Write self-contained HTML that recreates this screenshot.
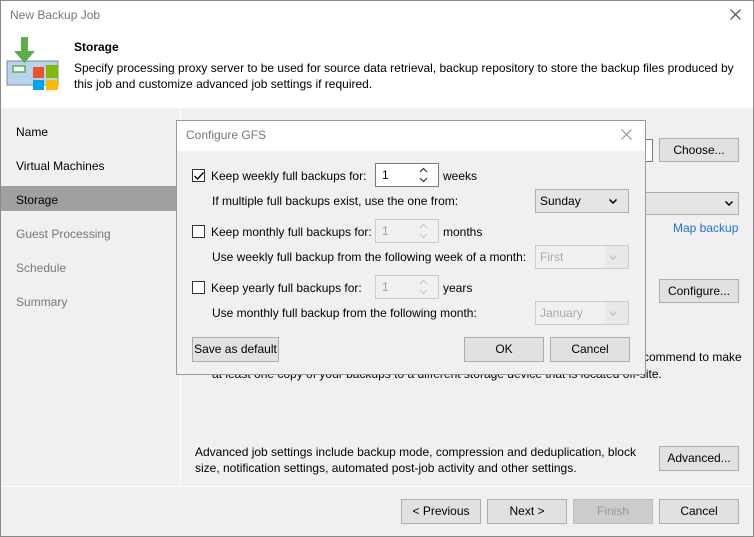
<!DOCTYPE html><html><head><style>
*{box-sizing:border-box;margin:0;padding:0}
body{width:754px;height:537px;overflow:hidden;font-family:"Liberation Sans",sans-serif;font-size:12px;color:#000;background:#f0f0f0;position:relative}
.a{position:absolute;white-space:nowrap}
.btn{position:absolute;background:#e1e1e1;border:1px solid #adadad;text-align:center;line-height:22px;font-size:12px}
.cb{position:absolute;width:13px;height:13px;border:1px solid #333;background:#fff}
.sp{position:absolute;width:64px;height:24px;border:1px solid #7a7a7a;background:#fff;padding-left:6px;line-height:22px}
.sp.d{border-color:#ccc;background:#f0f0f0;color:#a0a0a0}
.combo{position:absolute;width:94px;height:24px;border:1px solid #adadad;background:#e5e5e5;padding-left:4px;line-height:22px}
.combo.d{border-color:#ccc;background:#f0f0f0;color:#a8a8a8}
.nav{position:absolute;left:16px}
svg.i{position:absolute}
</style></head><body>
<div class="a" style="left:0;top:0;width:754px;height:537px;border:1px solid #8a8a8a"></div>
<div class="a" style="left:1px;top:1px;width:752px;height:107px;background:#fff"></div>
<div class="a" style="left:10px;top:8px;color:#777;font-size:12px">New Backup Job</div>
<svg class="i" style="left:730px;top:9px" width="11" height="11"><path d="M0.5 0.5L10.5 10.5M10.5 0.5L0.5 10.5" stroke="#444" stroke-width="1.2"/></svg>
<svg class="a" style="left:6px;top:36px" width="56" height="54" viewBox="0 0 56 54">
<rect x="1" y="25" width="51" height="24" fill="#b7d3ee" stroke="#7a8a99"/>
<rect x="7" y="30" width="12" height="6" fill="#fff" stroke="#5ab046" stroke-width="1.5"/>
<path d="M15 1h7v14h7l-10.5 12L8 15h7z" fill="#5ab046"/>
<rect x="27" y="31" width="11" height="11" fill="#f25022"/>
<rect x="40" y="29" width="12" height="13" fill="#7fba00"/>
<rect x="27" y="44" width="11" height="10" fill="#00a4ef"/>
<rect x="40" y="44" width="12" height="10" fill="#ffb900"/>
</svg>
<div class="a" style="left:74px;top:40px;font-weight:bold">Storage</div>
<div class="a" style="left:74px;top:60px;line-height:16px">Specify processing proxy server to be used for source data retrieval, backup repository to store the backup files produced by<br>this job and customize advanced job settings if required.</div>
<div class="a" style="left:180px;top:108px;width:1px;height:378px;background:#fff"></div>
<div class="a" style="left:1px;top:486px;width:752px;height:1px;background:#fff"></div>
<div class="nav a" style="top:125px">Name</div>
<div class="nav a" style="top:159px">Virtual Machines</div>
<div class="a" style="left:1px;top:186px;width:179px;height:25px;background:#a0a0a0"></div>
<div class="nav a" style="top:193px">Storage</div>
<div class="nav a" style="top:227px;color:#777">Guest Processing</div>
<div class="nav a" style="top:261px;color:#777">Schedule</div>
<div class="nav a" style="top:295px;color:#777">Summary</div>
<div class="a" style="left:600px;top:139px;width:53px;height:23px;border:1px solid #7a7a7a;background:#fff"></div>
<div class="btn" style="left:659px;top:138px;width:80px;height:24px">Choose...</div>
<div class="a" style="left:600px;top:192px;width:139px;height:23px;border:1px solid #adadad;background:#e5e5e5"></div>
<svg class="i" style="left:725px;top:201px" width="8" height="5"><path d="M0.5 0.5L4 4L7.5 0.5" stroke="#000" stroke-width="1.5" fill="none"/></svg>
<div class="a" style="left:673px;top:221px;color:#1a73e8">Map backup</div>
<div class="btn" style="left:659px;top:279px;width:80px;height:24px">Configure...</div>
<div class="a" style="left:643px;top:350px">commend to make</div>
<div class="a" style="left:212px;top:367px">at least one copy of your backups to a different storage device that is located off-site.</div>
<div class="a" style="left:195px;top:444px;line-height:16px">Advanced job settings include backup mode, compression and deduplication, block<br>size, notification settings, automated post-job activity and other settings.</div>
<div class="btn" style="left:659px;top:446px;width:80px;height:25px">Advanced...</div>
<div class="btn" style="left:401px;top:499px;width:80px;height:25px">&lt; Previous</div>
<div class="btn" style="left:487px;top:499px;width:80px;height:25px">Next &gt;</div>
<div class="btn" style="left:573px;top:499px;width:80px;height:25px;background:#ccc;border-color:#bfbfbf;color:#999">Finish</div>
<div class="btn" style="left:659px;top:499px;width:80px;height:25px">Cancel</div>

<div class="a" style="left:176px;top:120px;width:470px;height:255px;background:#f0f0f0;border:1px solid #999"></div>
<div class="a" style="left:177px;top:121px;width:468px;height:30px;background:#fff"></div>
<div class="a" style="left:186px;top:128px;color:#777">Configure GFS</div>
<svg class="i" style="left:621px;top:129px" width="11" height="11"><path d="M0.5 0.5L10.5 10.5M10.5 0.5L0.5 10.5" stroke="#888" stroke-width="1"/></svg>
<div class="cb" style="left:192px;top:169px"></div>
<svg class="i" style="left:194px;top:172px" width="10" height="8"><path d="M0.5 4L3.5 7L9.5 0.5" stroke="#000" stroke-width="1.3" fill="none"/></svg>
<div class="a" style="left:211px;top:169px">Keep weekly full backups for:</div>
<div class="sp" style="left:375px;top:163px">1</div>
<svg class="i" style="left:419px;top:167px" width="9" height="16"><path d="M1 5L4.5 1.5L8 5M1 11L4.5 14.5L8 11" stroke="#333" stroke-width="1.2" fill="none"/></svg>
<div class="a" style="left:443px;top:169px">weeks</div>
<div class="a" style="left:212px;top:194px">If multiple full backups exist, use the one from:</div>
<div class="combo" style="left:535px;top:189px">Sunday</div>
<svg class="i" style="left:609px;top:199px" width="8" height="5"><path d="M0.5 0.5L4 4L7.5 0.5" stroke="#000" stroke-width="1.5" fill="none"/></svg>
<div class="cb" style="left:192px;top:225px"></div>
<div class="a" style="left:211px;top:225px">Keep monthly full backups for:</div>
<div class="sp d" style="left:375px;top:219px">1</div>
<svg class="i" style="left:419px;top:223px" width="9" height="16"><path d="M1 5L4.5 1.5L8 5M1 11L4.5 14.5L8 11" stroke="#c8c8c8" stroke-width="1.2" fill="none"/></svg>
<div class="a" style="left:443px;top:225px">months</div>
<div class="a" style="left:212px;top:250px">Use weekly full backup from the following week of a month:</div>
<div class="combo d" style="left:535px;top:245px">First</div>
<div class="a" style="left:605px;top:246px;width:23px;height:22px;background:#e8e8e8"></div>
<svg class="i" style="left:609px;top:255px" width="8" height="5"><path d="M0.5 0.5L4 4L7.5 0.5" stroke="#bbb" stroke-width="1.2" fill="none"/></svg>
<div class="cb" style="left:192px;top:281px"></div>
<div class="a" style="left:211px;top:281px">Keep yearly full backups for:</div>
<div class="sp d" style="left:375px;top:275px">1</div>
<svg class="i" style="left:419px;top:279px" width="9" height="16"><path d="M1 5L4.5 1.5L8 5M1 11L4.5 14.5L8 11" stroke="#c8c8c8" stroke-width="1.2" fill="none"/></svg>
<div class="a" style="left:443px;top:281px">years</div>
<div class="a" style="left:212px;top:306px">Use monthly full backup from the following month:</div>
<div class="combo d" style="left:535px;top:301px">January</div>
<div class="a" style="left:605px;top:302px;width:23px;height:22px;background:#e8e8e8"></div>
<svg class="i" style="left:609px;top:311px" width="8" height="5"><path d="M0.5 0.5L4 4L7.5 0.5" stroke="#bbb" stroke-width="1.2" fill="none"/></svg>
<div class="btn" style="left:192px;top:337px;width:87px;height:25px">Save as default</div>
<div class="btn" style="left:464px;top:337px;width:80px;height:25px">OK</div>
<div class="btn" style="left:550px;top:337px;width:80px;height:25px">Cancel</div>
</body></html>
